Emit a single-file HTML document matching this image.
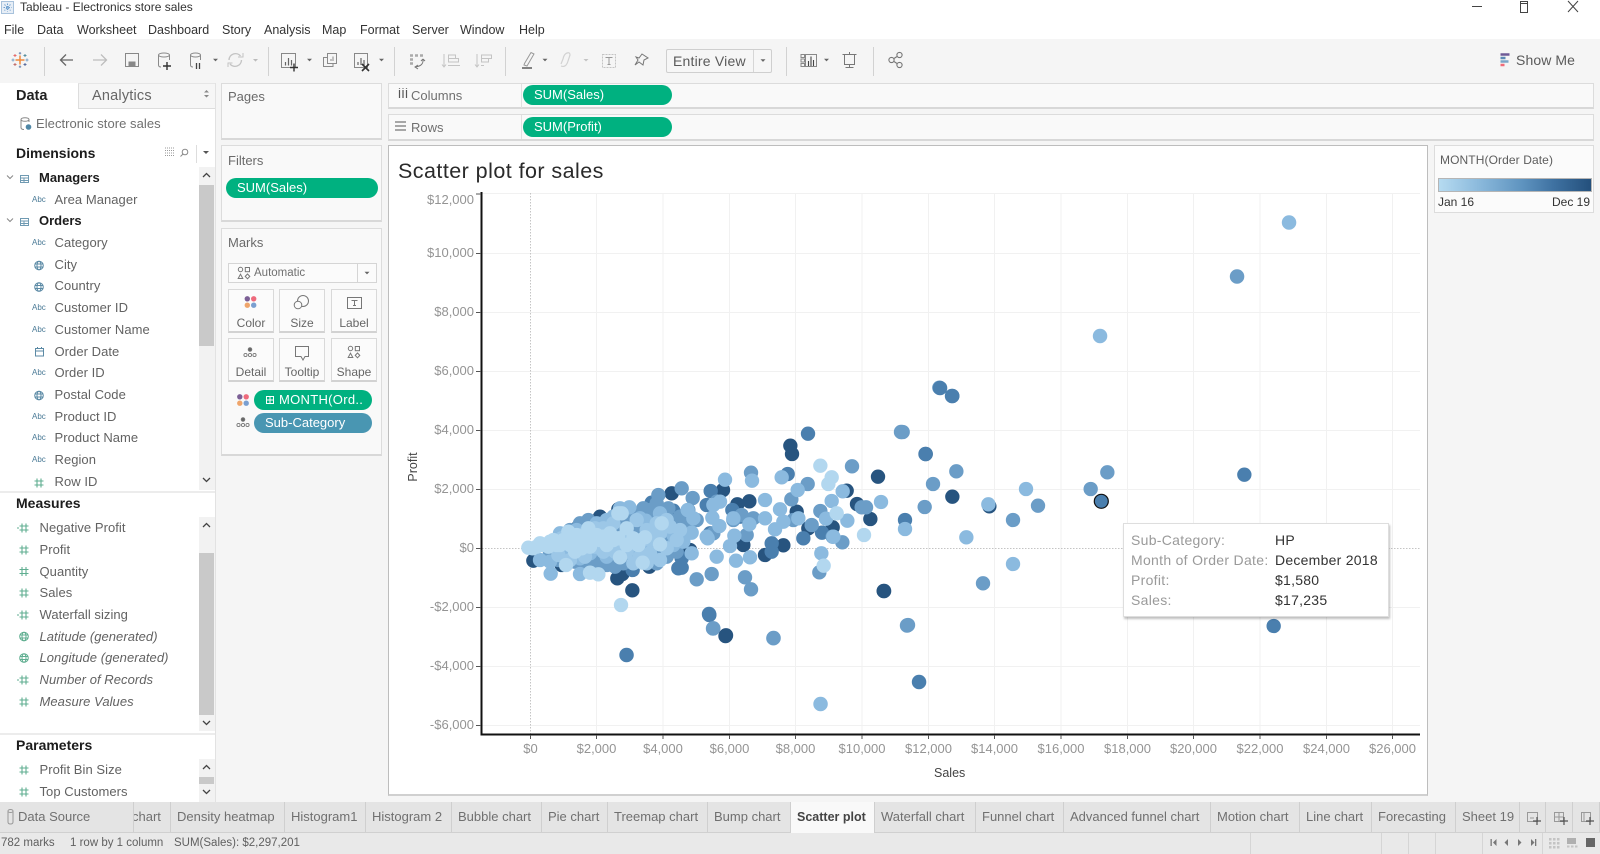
<!DOCTYPE html>
<html lang="en"><head><meta charset="utf-8"><title>Tableau - Electronics store sales</title>
<style>
html,body{margin:0;padding:0}
body{width:1600px;height:854px;position:relative;overflow:hidden;background:#f5f5f5;font-family:"Liberation Sans",sans-serif;color:#555}
.t{position:absolute;white-space:nowrap;line-height:20px;font-size:13px}
.b{position:absolute;box-sizing:border-box}
.card{position:absolute;box-sizing:border-box;background:#f9f9f9;border:1px solid #dcdcdc;border-bottom:2px solid #d8d8d8}
.pill{position:absolute;box-sizing:border-box;border-radius:11px;background:#00b180;color:#fff;font-size:13px;line-height:20px;padding-left:11px;white-space:nowrap}
.h{font-weight:bold;font-size:14px;color:#1c1c1c}
.abc{font-size:8px;color:#4a7a96}
.f{color:#626262;font-size:13px;letter-spacing:.05px}
.i{font-style:italic}
.mk{position:absolute;box-sizing:border-box;background:#fbfbfb;border:1px solid #d9d9d9;border-bottom:2px solid #d2d2d2;width:46px;height:44px}
.ml{position:absolute;font-size:12px;color:#666;text-align:center;line-height:16px}
.tab{position:absolute;top:802px;height:31px;box-sizing:border-box;border-right:1px solid #cfcfcf;border-bottom:1px solid #d0d0d0;background:#e4e4e4;font-size:13px;line-height:30px;padding-left:6px;color:#707070;white-space:nowrap;overflow:hidden}
.x{color:#949494}
svg{position:absolute;left:0;top:0}
</style></head><body>
<div class="b" style="left:0;top:0;width:1600px;height:39px;background:#fff"></div>
<div class="b" style="left:0;top:108px;width:215px;height:694px;background:#fff"></div>
<div class="b" style="left:0;top:83px;width:78px;height:25px;background:#fff"></div>
<div class="b" style="left:78px;top:83px;width:137px;height:26px;background:#f6f6f6;border-left:1px solid #ddd;border-bottom:1px solid #ddd;border-top:1px solid #e6e6e6"></div>
<div class="b" style="left:215px;top:83px;width:1px;height:719px;background:#e2e2e2"></div>

<span class="t" style="left:20px;top:-3px;font-size:12px;color:#333">Tableau - Electronics store sales</span>
<span class="t" style="left:4px;top:20px;color:#333;font-size:12.5px">File</span>
<span class="t" style="left:37px;top:20px;color:#333;font-size:12.5px">Data</span>
<span class="t" style="left:77px;top:20px;color:#333;font-size:12.5px">Worksheet</span>
<span class="t" style="left:148px;top:20px;color:#333;font-size:12.5px">Dashboard</span>
<span class="t" style="left:222px;top:20px;color:#333;font-size:12.5px">Story</span>
<span class="t" style="left:264px;top:20px;color:#333;font-size:12.5px">Analysis</span>
<span class="t" style="left:322px;top:20px;color:#333;font-size:12.5px">Map</span>
<span class="t" style="left:360px;top:20px;color:#333;font-size:12.5px">Format</span>
<span class="t" style="left:412px;top:20px;color:#333;font-size:12.5px">Server</span>
<span class="t" style="left:460px;top:20px;color:#333;font-size:12.5px">Window</span>
<span class="t" style="left:519px;top:20px;color:#333;font-size:12.5px">Help</span>

<div class="b" style="left:666px;top:49px;width:106px;height:24px;border:1px solid #cfcfcf;border-radius:2px;background:#f6f6f6"></div>
<div class="b" style="left:753px;top:50px;width:1px;height:22px;background:#d6d6d6"></div>
<span class="t" style="left:673px;top:51px;font-size:14px;color:#5a5a5a;letter-spacing:.2px">Entire View</span>
<span class="t" style="left:1516px;top:50px;font-size:14px;color:#5a5a5a;letter-spacing:.1px">Show Me</span>

<span class="t" style="left:16px;top:86px;font-size:14.5px;font-weight:bold;color:#222">Data</span>
<span class="t" style="left:92px;top:86px;font-size:14.5px;color:#666;letter-spacing:.2px">Analytics</span>
<span class="t" style="left:36px;top:114px;color:#707070;letter-spacing:.05px">Electronic store sales</span>

<span class="t h" style="left:16px;top:143px">Dimensions</span>
<span class="t h" style="left:39px;top:168px;font-size:13px">Managers</span>
<span class="t abc" style="left:32px;top:190px">Abc</span><span class="t f" style="left:54.5px;top:190px">Area Manager</span>
<span class="t h" style="left:39px;top:211px;font-size:13px">Orders</span>
<span class="t abc" style="left:32px;top:233px">Abc</span><span class="t f" style="left:54.5px;top:233px">Category</span>
<span class="t f" style="left:54.5px;top:255px">City</span>
<span class="t f" style="left:54.5px;top:276px">Country</span>
<span class="t abc" style="left:32px;top:298px">Abc</span><span class="t f" style="left:54.5px;top:298px">Customer ID</span>
<span class="t abc" style="left:32px;top:320px">Abc</span><span class="t f" style="left:54.5px;top:320px">Customer Name</span>
<span class="t f" style="left:54.5px;top:342px">Order Date</span>
<span class="t abc" style="left:32px;top:363px">Abc</span><span class="t f" style="left:54.5px;top:363px">Order ID</span>
<span class="t f" style="left:54.5px;top:385px">Postal Code</span>
<span class="t abc" style="left:32px;top:407px">Abc</span><span class="t f" style="left:54.5px;top:407px">Product ID</span>
<span class="t abc" style="left:32px;top:428px">Abc</span><span class="t f" style="left:54.5px;top:428px">Product Name</span>
<span class="t abc" style="left:32px;top:450px">Abc</span><span class="t f" style="left:54.5px;top:450px">Region</span>
<span class="t f" style="left:54.5px;top:472px">Row ID</span>

<div class="b" style="left:199px;top:167px;width:16px;height:323px;background:#f2f2f2"></div>
<div class="b" style="left:199px;top:185px;width:15px;height:161px;background:#c9c9c9"></div>
<div class="b" style="left:0;top:491px;width:215px;height:2px;background:#ececec"></div>

<span class="t h" style="left:16px;top:493px">Measures</span>
<span class="t f" style="left:39.5px;top:518px">Negative Profit</span>
<span class="t f" style="left:39.5px;top:540px">Profit</span>
<span class="t f" style="left:39.5px;top:561.5px">Quantity</span>
<span class="t f" style="left:39.5px;top:583px">Sales</span>
<span class="t f" style="left:39.5px;top:605px">Waterfall sizing</span>
<span class="t f i" style="left:39.5px;top:626.5px">Latitude (generated)</span>
<span class="t f i" style="left:39.5px;top:648px">Longitude (generated)</span>
<span class="t f i" style="left:39.5px;top:670px">Number of Records</span>
<span class="t f i" style="left:39.5px;top:692px">Measure Values</span>
<div class="b" style="left:199px;top:517px;width:16px;height:214px;background:#f2f2f2"></div>
<div class="b" style="left:199px;top:553px;width:15px;height:162px;background:#c9c9c9"></div>
<div class="b" style="left:0;top:733px;width:215px;height:2px;background:#ececec"></div>

<span class="t h" style="left:16px;top:735px">Parameters</span>
<span class="t f" style="left:39.5px;top:760px">Profit Bin Size</span>
<span class="t f" style="left:39.5px;top:782px">Top Customers</span>
<div class="b" style="left:199px;top:759px;width:16px;height:43px;background:#f2f2f2"></div>
<div class="b" style="left:199px;top:777px;width:15px;height:7px;background:#c9c9c9"></div>

<div class="card" style="left:221px;top:83px;width:161px;height:57px"></div>
<span class="t" style="left:228px;top:87px;color:#6a6a6a">Pages</span>
<div class="card" style="left:221px;top:145px;width:161px;height:77px"></div>
<span class="t" style="left:228px;top:151px;color:#6a6a6a">Filters</span>
<div class="pill" style="left:226px;top:178px;width:152px;height:20px">SUM(Sales)</div>
<div class="card" style="left:221px;top:228px;width:161px;height:228px"></div>
<span class="t" style="left:228px;top:233px;color:#6a6a6a">Marks</span>
<div class="b" style="left:228px;top:263px;width:149px;height:20px;background:#fbfbfb;border:1px solid #d5d5d5"></div>
<div class="b" style="left:357px;top:264px;width:1px;height:18px;background:#d5d5d5"></div>
<span class="t" style="left:254px;top:263px;font-size:11.5px;color:#707070">Automatic</span>
<div class="mk" style="left:228px;top:289px"></div><div class="mk" style="left:279px;top:289px"></div><div class="mk" style="left:331px;top:289px"></div>
<div class="mk" style="left:228px;top:338px"></div><div class="mk" style="left:279px;top:338px"></div><div class="mk" style="left:331px;top:338px"></div>
<span class="ml" style="left:228px;top:315px;width:46px">Color</span><span class="ml" style="left:279px;top:315px;width:46px">Size</span><span class="ml" style="left:331px;top:315px;width:46px">Label</span>
<span class="ml" style="left:228px;top:364px;width:46px">Detail</span><span class="ml" style="left:279px;top:364px;width:46px">Tooltip</span><span class="ml" style="left:331px;top:364px;width:46px">Shape</span>
<div class="pill" style="left:254px;top:390px;width:118px;height:20px;padding-left:25px;letter-spacing:.3px">MONTH(Ord..</div>
<div class="pill" style="left:254px;top:413px;width:118px;height:20px;background:#4996b2">Sub-Category</div>

<div class="card" style="left:388px;top:83px;width:1206px;height:26px"></div>
<div class="b" style="left:521px;top:84px;width:1px;height:24px;background:#e0e0e0"></div>
<span class="t" style="left:411px;top:86px;color:#707070">Columns</span>
<div class="pill" style="left:523px;top:85px;width:149px;height:20px">SUM(Sales)</div>
<div class="card" style="left:388px;top:114px;width:1206px;height:27px"></div>
<div class="b" style="left:521px;top:115px;width:1px;height:24px;background:#e0e0e0"></div>
<span class="t" style="left:411px;top:118px;color:#707070">Rows</span>
<div class="pill" style="left:523px;top:117px;width:149px;height:20px">SUM(Profit)</div>

<div class="b" style="left:388px;top:145px;width:1040px;height:651px;background:#fff;border:1px solid #bdbdbd;border-bottom:2px solid #d0d0d0"></div>
<div class="b" style="left:1434px;top:145px;width:160px;height:68px;background:#fbfbfb;border:1px solid #dcdcdc"></div>
<span class="t" style="left:1440px;top:150px;font-size:12px;color:#5d5d5d;letter-spacing:.1px">MONTH(Order Date)</span>
<div class="b" style="left:1437.5px;top:178px;width:154px;height:14px;background:linear-gradient(90deg,#b6dbf1,#8dbbdd 25%,#5e93bf 55%,#3f72a2 75%,#24507c);border:1px solid #b5b5b5"></div>
<span class="t" style="left:1438px;top:192px;font-size:12px;color:#333">Jan 16</span>
<span class="t" style="left:1552px;top:192px;font-size:12px;color:#333">Dec 19</span>

<span class="t" style="left:398px;top:161px;font-size:21.5px;color:#2a2a2a;letter-spacing:.45px">Scatter plot for sales</span>

<svg width="1600" height="854" viewBox="0 0 1600 854" fill="none">
<defs>
<g id="gl" stroke="#5b8aa5" stroke-width="1"><circle cx="0" cy="0" r="4.3"/><ellipse cx="0" cy="0" rx="2" ry="4.3"/><path d="M-4.3 -1.5H4.3M-4.3 1.5H4.3"/></g>
<g id="gg" stroke="#5fae90" stroke-width="1"><circle cx="0" cy="0" r="4.3"/><ellipse cx="0" cy="0" rx="2" ry="4.3"/><path d="M-4.3 -1.5H4.3M-4.3 1.5H4.3"/></g>
<path id="h" stroke="#5fae90" stroke-width="1.1" d="M-2 -4.5V4.5M2 -4.5V4.5M-4.5 -2H4.5M-4.5 2H4.5"/>
<g id="cd"><circle cx="-3.2" cy="-3.2" r="2.7" fill="#7b5f95"/><circle cx="3.2" cy="-3.2" r="2.7" fill="#ee6a7c"/><circle cx="-3.2" cy="3.2" r="2.7" fill="#efa56b"/><circle cx="3.2" cy="3.2" r="2.7" fill="#7a9fd0"/></g>
<g id="dt" stroke="#777" stroke-width=".9"><circle cx="0" cy="-3.5" r="1.8" fill="#666"/><circle cx="-4.5" cy="2" r="1.6"/><circle cx="0" cy="2" r="1.6"/><circle cx="4.5" cy="2" r="1.6"/></g>
<g id="sh" stroke="#777" stroke-width="1"><circle cx="-3.5" cy="-3.5" r="2.2"/><rect x="1.3" y="-5.5" width="4.2" height="4.2"/><path d="M-3.5 1.2L-1.2 5.5H-5.8Z"/><path d="M3.5 1L5.8 3.4L3.5 5.8L1.2 3.4Z"/></g>
<path id="cr" fill="#666" d="M-2.5 -1.2H2.5L0 1.4Z"/>
</defs>

<!-- title bar -->
<g stroke="#6d9fcf"><rect x="1.5" y="1.5" width="12" height="12" fill="#e7eef6" stroke="#a8c2dc"/><path d="M7.5 3.5V11.5M3.5 7.5H11.5M4.5 4.5L10.5 10.5M10.5 4.5L4.5 10.5" stroke-dasharray="1.5 1"/></g>
<g stroke="#444" stroke-width="1"><path d="M1472 6.5H1482"/><path d="M1520.5 3.5V1.5H1527.5V10.5H1527"/><rect x="1520.5" y="3.5" width="7" height="9"/><path d="M1568 1L1578 12M1578 1L1568 12"/></g>

<!-- toolbar -->
<g>
<path d="M20 55.5V64.5M15.5 60H24.5" stroke="#f08a3c" stroke-width="1.5"/>
<path d="M20 52V54.5M18.8 53.2H21.2M20 65.5V68M18.8 66.8H21.2" stroke="#7189b3" stroke-width="1"/>
<path d="M13 58.5V61.5M11.500 60H14.500M27 58.5V61.500M25.500 60H28.500" stroke="#7aa3c7" stroke-width="1"/>
<path d="M15 54V57M13.500 55.500H16.500" stroke="#e56b6b" stroke-width="1"/>
<path d="M25 54V57M23.500 55.500H26.500" stroke="#58909f" stroke-width="1"/>
<path d="M15 63V66M13.500 64.500H16.500" stroke="#c2716e" stroke-width="1"/>
<path d="M25 63V66M23.500 64.500H26.500" stroke="#5b6e9e" stroke-width="1"/>
</g>
<path stroke="#d2d2d2" d="M44.5 47V76M268.5 47V76M394.5 47V76M505.5 47V76M786.5 47V76M873.5 47V76"/>
<path d="M73 60H61M66 54.5L60.5 60L66 65.5" stroke="#666" stroke-width="1.3"/>
<path d="M93 60H106M101 54.5L106.5 60L101 65.5" stroke="#bdbdbd" stroke-width="1.3"/>
<g stroke="#888" stroke-width="1"><rect x="125.5" y="53.5" width="13" height="13"/><rect x="129" y="62" width="6" height="4" fill="#888"/></g>
<g stroke="#8a8a8a" stroke-width="1"><path d="M158.500 55V65Q158.500 67 161 67M169.500 55V60"/><ellipse cx="164" cy="55" rx="5.500" ry="2"/></g><path d="M163 66H171M167 62V70" stroke="#333" stroke-width="1.4"/>
<g stroke="#8a8a8a" stroke-width="1"><path d="M190.500 55V65Q190.500 67 193 67M200.500 55V60"/><ellipse cx="195.500" cy="55" rx="5" ry="2"/></g><path d="M196.500 63V69M199.500 63V69" stroke="#444" stroke-width="1.300"/>
<use href="#cr" x="215.500" y="60"/>
<path d="M229 60A6.500 6.500 0 0 1 240.500 56M241.500 60A6.500 6.500 0 0 1 230 64" stroke="#c4c4c4" stroke-width="1.400"/><path d="M238 57H243V53M232.500 63H228V67" stroke="#c4c4c4"/>
<path fill="#bbb" d="M253 59H258L255.500 61.600Z"/>
<g stroke="#888"><rect x="281.500" y="53.500" width="14" height="14"/><path d="M285.500 62V65.500M288.500 58V65.500M291.500 60V65.500" stroke="#666" stroke-width="1.200"/></g><path d="M290 67.500H298M294 63.500V71.500" stroke="#333" stroke-width="1.400"/>
<use href="#cr" x="309.500" y="60"/>
<g stroke="#8a8a8a"><rect x="327.500" y="53.500" width="9" height="10" fill="#f5f5f5"/><path d="M327 57.500H323.500V66.500H333V64M331 61V59M333 61V56.500"/></g>
<g stroke="#888"><rect x="354.500" y="53.500" width="13" height="14"/><path d="M358 62V65M361 58V65M364 60V65" stroke="#666" stroke-width="1.200"/></g><path d="M362 64L369 71M369 64L362 71" stroke="#333" stroke-width="1.600"/>
<use href="#cr" x="381.500" y="60"/>
<g stroke="#aaa"><path d="M410 55.500h3M415 55.500h3M420 55.500h3M410 59.500h3M410 63.500h3" stroke-width="2.500"/><path d="M423 59Q424 66 415 67M418 65l-3 2l3 2M423 59l-2 2M423 59l2 2" stroke="#777"/></g>
<g stroke="#c4c4c4"><path d="M444 54V67M442 64.500L444 67L446 64.500"/><rect x="448.500" y="55" width="7" height="3.500"/><rect x="448.500" y="58.500" width="10" height="3.500"/><path d="M448 65.500H460"/></g>
<g stroke="#c4c4c4"><path d="M477 54V67M475 64.500L477 67L479 64.500"/><rect x="481.500" y="55" width="10" height="3.500"/><rect x="481.500" y="58.500" width="7" height="3.500"/><path d="M481 65.500H484"/></g>
<path d="M524 65L527 66L534 54L531 52.500L524.500 63.500Z" stroke="#999"/><path d="M522 68H532" stroke="#444" stroke-width="1.300"/>
<use href="#cr" x="545" y="60"/>
<path d="M561 66Q566 68 568 61L570 55Q570 52 567 53Q564 54 563 59L561 64" stroke="#d2d2d2" stroke-width="1.200"/><path fill="#c4c4c4" d="M583.500 59H588.500L586 61.500Z"/>
<g stroke="#c4c4c4"><rect x="602.500" y="54.500" width="13" height="13" stroke-dasharray="2 1"/></g><path d="M605.500 57.500H612.500M609 57.500V64.500M607.500 64.500H610.500" stroke="#999"/>
<path d="M642 54L648 58L644 60L643 65L639 62L635 65L638 60L636 57L639 58Z" stroke="#777" stroke-width="1"/>
<use href="#cr" x="763" y="60.500"/>
<g stroke="#888"><rect x="801" y="54.500" width="3.500" height="3"/><rect x="801" y="59" width="3.500" height="3"/><rect x="801" y="63.500" width="3.500" height="3"/><rect x="805.500" y="54.500" width="11" height="12"/></g><path d="M808.500 66V61M811 66V56.500M813.500 66V60" stroke="#444" stroke-width="1.100"/>
<use href="#cr" x="826.500" y="60"/>
<g stroke="#777"><path d="M842.500 54.500H856.500M844.500 54.500V64.500H854.500V54.500M849.500 52V54M849.500 64.500V67.500M845.500 67.500H853.500"/></g>
<g stroke="#777" stroke-width="1.100"><circle cx="891.500" cy="60" r="2.600"/><circle cx="899.500" cy="55" r="2.600"/><circle cx="899.500" cy="65" r="2.600"/><path d="M894 58.500L897 56.500M894 61.500L897 63.500"/></g>
<path d="M1500.500 54.500h9" stroke="#6f5a96" stroke-width="2.500"/><path d="M1500.500 58h5" stroke="#5c8ab5" stroke-width="2.500"/><path d="M1500.500 61.500h8" stroke="#7aa6c8" stroke-width="2.500"/><path d="M1500.500 65h4" stroke="#ef6c7a" stroke-width="2.500"/>

<!-- data panel -->
<path fill="#888" d="M204 92.500L206.500 90L209 92.500ZM204 95L206.500 97.500L209 95Z"/>
<g stroke="#888"><path d="M21 119.500V127.500Q21 129.500 24 129.500M29 119.500V122"/><ellipse cx="25" cy="119.500" rx="4" ry="1.800"/></g><circle cx="28.500" cy="127" r="2.800" fill="#4f86a5"/>
<g stroke="#999" stroke-dasharray="1 1"><path d="M165 148H175M165 150.500H175M165 153H175M165 155.500H175"/></g>
<circle cx="185" cy="152" r="2.800" stroke="#888"/><path d="M183 154L180.500 156.500" stroke="#888"/>
<path d="M196.500 145V163" stroke="#ddd"/><path fill="#555" d="M203 151H209L206 154Z"/>
<g stroke="#888"><path d="M7 175.500L10 178.500L13 175.500M7 218.500L10 221.500L13 218.500"/></g>
<g stroke="#6f9ab2"><rect x="20.500" y="175.500" width="8" height="7"/><path d="M20.500 178H28.500M20.500 180.500H28.500M24 178V182.500"/><rect x="20.500" y="218.500" width="8" height="7"/><path d="M20.500 221H28.500M20.500 223.500H28.500M24 221V225.500"/></g>
<use href="#gl" x="39" y="265.500"/><use href="#gl" x="39" y="287"/><use href="#gl" x="39" y="395.500"/>
<g stroke="#5b8aa5"><rect x="35.500" y="348.500" width="8" height="7.500"/><path d="M35.500 351H43.500M37.500 347V349M41.500 347V349"/></g>
<use href="#h" x="39" y="483"/>
<g stroke="#444" stroke-width="1.300"><path d="M203 177L206.500 173.500L210 177M203 478L206.500 481.500L210 478M203 527L206.500 523.500L210 527M203 721L206.500 724.500L210 721M203 769L206.500 765.500L210 769M203 790L206.500 793.500L210 790"/></g>
<use href="#h" x="24" y="528"/><path d="M17 528H19" stroke="#5fae90"/><use href="#h" x="24" y="550"/><use href="#h" x="24" y="571.500"/><use href="#h" x="24" y="593"/><use href="#h" x="24" y="615"/><path d="M17 615H19" stroke="#5fae90"/>
<use href="#gg" x="24" y="636.500"/><use href="#gg" x="24" y="658"/><use href="#h" x="24" y="680"/><path d="M17 680H19" stroke="#5fae90"/><use href="#h" x="24" y="702"/>
<use href="#h" x="24" y="770"/><use href="#h" x="24" y="792"/>

<!-- shelves icons -->
<path d="M399.500 90V98M403 90V98M406.500 90V98" stroke="#555" stroke-width="1.200"/><path d="M399.500 88v.800M403 88v.800M406.500 88v.800" stroke="#555" stroke-width="1.200"/>
<path d="M395 122H406M395 126H406M395 130H406" stroke="#555" stroke-width="1"/>

<!-- marks icons -->
<use href="#sh" x="244" y="273"/>
<use href="#cr" x="367" y="273"/>
<use href="#cd" x="250.500" y="302"/>
<g stroke="#777"><circle cx="303" cy="301" r="5.500"/><circle cx="298" cy="305" r="3.800" fill="#fbfbfb"/></g>
<g stroke="#777"><rect x="347.500" y="297.500" width="14" height="11"/><path d="M351.500 300.500H357.500M354.500 300.500V305.500M353 305.500H356"/></g>
<use href="#dt" x="250" y="353"/>
<path d="M295.500 346.500H308.500V356.500H305L303 360L301 356.500H295.500Z" stroke="#777"/>
<use href="#sh" x="354" y="352"/>
<use href="#cd" x="243" y="400"/>
<use href="#dt" x="243" y="423"/>
<g stroke="#fff"><rect x="266.500" y="396.500" width="7" height="7"/><path d="M270 396.500V403.500M266.500 400H273.500"/></g>

<!-- chart grid -->
<g stroke="#f1f1f1"><path d="M596.500 193V734M663 193V734M729.500 193V734M795.500 193V734M862 193V734M928.500 193V734M994.500 193V734M1061 193V734M1127.500 193V734M1193.500 193V734M1260 193V734M1326.500 193V734M1392.500 193V734"/>
<path d="M482 193.500H1420M482 253.500H1420M482 312.500H1420M482 371.500H1420M482 430.500H1420M482 489.500H1420M482 607.500H1420M482 666.500H1420M482 725.500H1420"/></g>
<path d="M530.500 193V734M482 548.500H1420" stroke="#c4c4c4" stroke-dasharray="1.500 1.500"/>
<path d="M481.500 192V734.500H1420" stroke="#111" stroke-width="2"/>
<g stroke="#555"><path d="M530.500 735V739M596.500 735V739M663 735V739M729.500 735V739M795.500 735V739M862 735V739M928.500 735V739M994.500 735V739M1061 735V739M1127.500 735V739M1193.500 735V739M1260 735V739M1326.500 735V739M1392.500 735V739"/><path d="M476 194H481M476 253.500H481M476 312.500H481M476 371.500H481M476 430.500H481M476 489.500H481M476 548.500H481M476 607.500H481M476 666.500H481M476 725.500H481"/></g>

<!-- marks -->
<g stroke-linecap="round">
<g transform="translate(500 420) scale(.33333)" stroke-width="43">
<path stroke="#27547f" d="M871 77h.1M876 102h.1M1134 170h.1M669 210h.1M712 253h.1M748 244h.1M1040 212h.1M1071 252h.1M1111 297h.1M998 322h.1M850 376h.1M795 405h.1M352 475h.1M397 511h.1M1151 513h.1M515 220h.1M367 462h.1M355 268h.1M448 440h.1M280 432h.1M530 315h.1M890 275h.1M570 390h.1M100 422h.1M185 435h.1M235 320h.1M300 290h.1M925 325h.1M730 375h.1M678 646h.1"/>
<path stroke="#4a7fae" d="M924 41h.1M863 162h.1M632 213h.1M815 370h.1M815 395h.1M910 355h.1M535 445h.1M545 443h.1M398 450h.1M628 585h.1M966 338h.1M520 272h.1M620 255h.1M697 270h.1M455 248h.1M545 415h.1M525 290h.1M630 340h.1M720 290h.1"/>
<path stroke="#6b9dc7" d="M753 158h.1M1056 139h.1M545 205h.1M923 192h.1M475 225h.1M578 234h.1M874 238h.1M961 273h.1M1027 367h.1M998 350h.1M735 472h.1M753 508h.1M958 457h.1M640 625h.1M590 478h.1M635 462h.1M1098 262h.1M1085 262h.1M740 345h.1M760 295h.1M445 290h.1M480 280h.1M510 300h.1M565 270h.1M590 300h.1M455 345h.1M490 340h.1M520 375h.1M460 410h.1M500 410h.1M320 435h.1M470 250h.1M420 295h.1M640 340h.1M700 300h.1M725 285h.1M650 245h.1M935 315h.1M880 300h.1M440 380h.1M380 420h.1M300 410h.1M250 350h.1M200 400h.1M300 320h.1M340 300h.1M400 320h.1M420 340h.1M365 400h.1M340 430h.1M290 400h.1M210 330h.1M150 400h.1M240 310h.1M265 300h.1M280 330h.1M340 330h.1M370 430h.1M465 375h.1M415 350h.1M330 390h.1M450 310h.1M430 265h.1M450 270h.1M505 265h.1M540 290h.1M560 320h.1M545 350h.1M510 345h.1M480 395h.1M510 395h.1M530 395h.1M470 430h.1M430 410h.1M400 430h.1M345 440h.1M320 415h.1M280 420h.1M250 430h.1M300 440h.1M225 425h.1M175 420h.1M400 285h.1M375 300h.1M350 310h.1M330 320h.1M300 335h.1M270 315h.1M245 325h.1M225 340h.1"/>
<path stroke="#8bbadf" d="M675 179h.1M756 182h.1M845 172h.1M893 210h.1M795 240h.1M840 268h.1M850 305h.1M795 295h.1M895 295h.1M1028 214h.1M995 243h.1M1042 302h.1M964 400h.1M820 655h.1M152 461h.1M240 462h.1M575 338h.1M623 355h.1M658 318h.1M703 347h.1M690 378h.1M650 410h.1M708 422h.1M750 412h.1M550 365h.1M575 400h.1M563 270h.1M580 295h.1M437 302h.1M480 280h.1M420 295h.1M388 262h.1M1000 350h.1M978 296h.1M825 328h.1M748 313h.1M640 255h.1M660 245h.1M637 293h.1M1143 246h.1M700 295h.1M120 420h.1M150 425h.1M240 415h.1M320 410h.1M300 370h.1M340 290h.1M360 265h.1M420 380h.1M460 350h.1M500 330h.1M520 375h.1M445 325h.1M400 400h.1M290 310h.1M320 300h.1M230 330h.1M180 340h.1M270 400h.1M190 400h.1M520 345h.1M620 350h.1"/>
<path stroke="#9cc7e7" d="M410 300h.1M440 330h.1M470 310h.1M500 300h.1M540 330h.1M530 360h.1M510 320h.1M480 340h.1M450 360h.1M420 410h.1M450 400h.1M480 420h.1M500 385h.1M440 430h.1M400 430h.1M370 350h.1M340 310h.1M310 325h.1M285 325h.1M255 340h.1M215 350h.1M185 355h.1M160 375h.1M175 405h.1M210 420h.1M255 410h.1M285 380h.1M310 395h.1M345 395h.1M380 395h.1M350 380h.1"/>
<path stroke="#b2d7ef" d="M961 137h.1M995 172h.1M985 192h.1M1010 280h.1M1092 345h.1M971 437h.1M363 555h.1M428 428h.1M360 412h.1M198 435h.1M270 458h.1M295 463h.1M480 373h.1M485 310h.1M400 355h.1M435 352h.1M355 355h.1M355 280h.1M265 325h.1M330 340h.1M245 385h.1M205 335h.1M150 365h.1M110 380h.1M85 383h.1M130 375h.1M190 360h.1M230 345h.1M290 345h.1M310 350h.1M270 350h.1M170 375h.1M200 370h.1M365 280h.1M340 360h.1M380 325h.1M380 375h.1M98 385h.1M120 370h.1M145 380h.1M160 360h.1M210 375h.1M250 365h.1M320 375h.1M300 360h.1M415 375h.1M180 375h.1M225 395h.1M270 380h.1"/>
</g>
<g transform="translate(900 380) scale(.33333)" stroke-width="43">
<path stroke="#27547f" d="M77 222h.1M157 350h.1M268 379h.1"/>
<path stroke="#4a7fae" d="M157 48h.1M15 420h.1M1033 284h.1M1121 738h.1"/>
<path stroke="#6b9dc7" d="M118 23h.1M8 156h.1M169 274h.1M99 312h.1M74 381h.1M339 420h.1M414 377h.1M249 610h.1M572 327h.1M622 277h.1M24 735h.1"/>
<path stroke="#8bbadf" d="M265 373h.1M199 472h.1M378 327h.1M339 552h.1M15 447h.1"/>
</g>
<g stroke-width="14.400">
<path stroke="#27547f" d="M884 591h.1M725.500 636h.1"/>
<path stroke="#4a7fae" d="M940 388h.1M952 396h.1M925.500 454h.1M919 682h.1M709 614h.1M626.500 655h.1"/>
<path stroke="#6b9dc7" d="M901 432h.1M907 625.500h.1M1237 276.500h.1M713 628.500h.1M773.500 638h.1"/>
<path stroke="#8bbadf" d="M1289 222.500h.1M1100 336h.1M820.500 704h.1"/>
</g>
<circle cx="1101.300" cy="501.300" r="7" fill="#4a7fae" stroke="#111" stroke-width="1.200"/>
</g>
</svg>

<!-- tooltip -->
<div class="b" style="left:1123px;top:523px;width:266px;height:94px;background:#fff;border:1px solid #dedede;box-shadow:1px 2px 2px rgba(0,0,0,.25)"></div>
<span class="t" style="left:1131px;top:530px;color:#9a9a9a;font-size:14px;letter-spacing:.3px">Sub-Category:</span><span class="t" style="left:1275px;top:530px;color:#333;font-size:14px;letter-spacing:.25px">HP</span>
<span class="t" style="left:1131px;top:550px;color:#9a9a9a;font-size:14px;letter-spacing:.3px">Month of Order Date:</span><span class="t" style="left:1275px;top:550px;color:#333;font-size:14px;letter-spacing:.25px">December 2018</span>
<span class="t" style="left:1131px;top:570px;color:#9a9a9a;font-size:14px;letter-spacing:.3px">Profit:</span><span class="t" style="left:1275px;top:570px;color:#333;font-size:14px;letter-spacing:.25px">$1,580</span>
<span class="t" style="left:1131px;top:590px;color:#9a9a9a;font-size:14px;letter-spacing:.3px">Sales:</span><span class="t" style="left:1275px;top:590px;color:#333;font-size:14px;letter-spacing:.25px">$17,235</span>

<!-- axis labels -->
<span class="t x" style="left:426px;width:48px;text-align:right;top:190px">$12,000</span>
<span class="t x" style="left:426px;width:48px;text-align:right;top:243px">$10,000</span>
<span class="t x" style="left:426px;width:48px;text-align:right;top:302px">$8,000</span>
<span class="t x" style="left:426px;width:48px;text-align:right;top:361px">$6,000</span>
<span class="t x" style="left:426px;width:48px;text-align:right;top:420px">$4,000</span>
<span class="t x" style="left:426px;width:48px;text-align:right;top:479px">$2,000</span>
<span class="t x" style="left:426px;width:48px;text-align:right;top:538px">$0</span>
<span class="t x" style="left:426px;width:48px;text-align:right;top:597px">-$2,000</span>
<span class="t x" style="left:426px;width:48px;text-align:right;top:656px">-$4,000</span>
<span class="t x" style="left:426px;width:48px;text-align:right;top:715px">-$6,000</span>
<span class="t x" style="left:500.500px;width:60px;text-align:center;top:739px">$0</span>
<span class="t x" style="left:566.500px;width:60px;text-align:center;top:739px">$2,000</span>
<span class="t x" style="left:633px;width:60px;text-align:center;top:739px">$4,000</span>
<span class="t x" style="left:699.500px;width:60px;text-align:center;top:739px">$6,000</span>
<span class="t x" style="left:765.500px;width:60px;text-align:center;top:739px">$8,000</span>
<span class="t x" style="left:832px;width:60px;text-align:center;top:739px">$10,000</span>
<span class="t x" style="left:898.500px;width:60px;text-align:center;top:739px">$12,000</span>
<span class="t x" style="left:964.500px;width:60px;text-align:center;top:739px">$14,000</span>
<span class="t x" style="left:1031px;width:60px;text-align:center;top:739px">$16,000</span>
<span class="t x" style="left:1097.500px;width:60px;text-align:center;top:739px">$18,000</span>
<span class="t x" style="left:1163.500px;width:60px;text-align:center;top:739px">$20,000</span>
<span class="t x" style="left:1230px;width:60px;text-align:center;top:739px">$22,000</span>
<span class="t x" style="left:1296.500px;width:60px;text-align:center;top:739px">$24,000</span>
<span class="t x" style="left:1362.500px;width:60px;text-align:center;top:739px">$26,000</span>
<span class="t" style="left:934px;top:763px;color:#444;font-size:12.500px">Sales</span>
<span class="t" style="left:393px;top:457px;color:#444;font-size:12.500px;width:40px;text-align:center;transform:rotate(-90deg)">Profit</span>

<!-- tabs -->
<div class="b" style="left:0;top:802px;width:1600px;height:31px;background:#e4e4e4;border-top:1px solid #ddd"></div>
<div class="b" style="left:0;top:833px;width:1600px;height:21px;background:#e9e9e9"></div>
<div class="tab" style="left:0;width:134px;padding-left:18px">Data Source</div>
<div class="tab" style="left:134px;width:37px;padding-left:0"><span style="margin-left:-2px">chart</span></div>
<div class="tab" style="left:171px;width:114px">Density heatmap</div>
<div class="tab" style="left:285px;width:81px">Histogram1</div>
<div class="tab" style="left:366px;width:86px">Histogram 2</div>
<div class="tab" style="left:452px;width:90px">Bubble chart</div>
<div class="tab" style="left:542px;width:66px">Pie chart</div>
<div class="tab" style="left:608px;width:100px">Treemap chart</div>
<div class="tab" style="left:708px;width:83px">Bump chart</div>
<div class="tab" style="left:791px;width:84px;background:#f9f9f9;font-weight:bold;color:#444;font-size:12.500px;border-bottom:none">Scatter plot</div>
<div class="tab" style="left:875px;width:101px">Waterfall chart</div>
<div class="tab" style="left:976px;width:88px">Funnel chart</div>
<div class="tab" style="left:1064px;width:147px">Advanced funnel chart</div>
<div class="tab" style="left:1211px;width:89px">Motion chart</div>
<div class="tab" style="left:1300px;width:72px">Line chart</div>
<div class="tab" style="left:1372px;width:84px">Forecasting</div>
<div class="tab" style="left:1456px;width:64px">Sheet 19</div>
<div class="tab" style="left:1520px;width:26px"></div>
<div class="tab" style="left:1546px;width:27px"></div>
<div class="tab" style="left:1573px;width:27px"></div>
<span class="t" style="left:1px;top:833px;font-size:11.500px;color:#606060">782 marks</span>
<span class="t" style="left:70px;top:833px;font-size:11.500px;color:#606060">1 row by 1 column</span>
<span class="t" style="left:174px;top:833px;font-size:11.500px;color:#606060">SUM(Sales): $2,297,201</span>
<svg width="1600" height="854" viewBox="0 0 1600 854" fill="none">
<g stroke="#999"><path d="M8 811V822Q8 824 10.500 824Q13 824 13 822V811"/><ellipse cx="10.500" cy="811" rx="2.500" ry="1.500"/></g>
<g stroke="#999"><rect x="1527.500" y="812.500" width="10" height="9"/><path d="M1530 818H1534"/></g><path d="M1533 821H1541M1537 817V825" stroke="#555" stroke-width="1.200"/>
<g stroke="#999"><rect x="1554.500" y="812.500" width="9" height="9"/><path d="M1554.500 817H1563.500M1559 812.500V821.500"/></g><path d="M1560 821H1568M1564 817V825" stroke="#555" stroke-width="1.200"/>
<g stroke="#999"><path d="M1581.500 812.500H1590.500V821.500H1581.500ZM1584 812.500V821.500"/></g><path d="M1586 821H1594M1590 817V825" stroke="#555" stroke-width="1.200"/>
<path fill="#777" d="M1490.500 839h1.300v7h-1.300zM1496.500 839v7l-3.500-3.500zM1508 839v7l-3.500-3.500zM1518 839v7l3.500-3.500zM1531 839v7l3.500-3.500zM1535 839h1.300v7h-1.300z"/>
<g fill="#c4c4c4"><path d="M1549 838h2.500v2.500h-2.500zM1553 838h2.500v2.500h-2.500zM1557 838h2.500v2.500h-2.500zM1549 842h2.500v2.500h-2.500zM1553 842h2.500v2.500h-2.500zM1557 842h2.500v2.500h-2.500zM1549 846h2.500v2.500h-2.500zM1553 846h2.500v2.500h-2.500zM1557 846h2.500v2.500h-2.500z"/><rect x="1567" y="838" width="9" height="6" fill="#b0b0b0"/><path d="M1567 845.500h2.500v2h-2.500zM1571 845.500h2.500v2h-2.500zM1575 845.500h2.500v2h-2.500z"/><rect x="1586" y="838" width="9" height="9" fill="#666"/></g>
<path stroke="#d5d5d5" d="M1250.500 833V854M1381.500 833V854M1408.500 833V854M1435.500 833V854M1482.500 833V854M1542.500 833V854"/>
</svg>
</body></html>
